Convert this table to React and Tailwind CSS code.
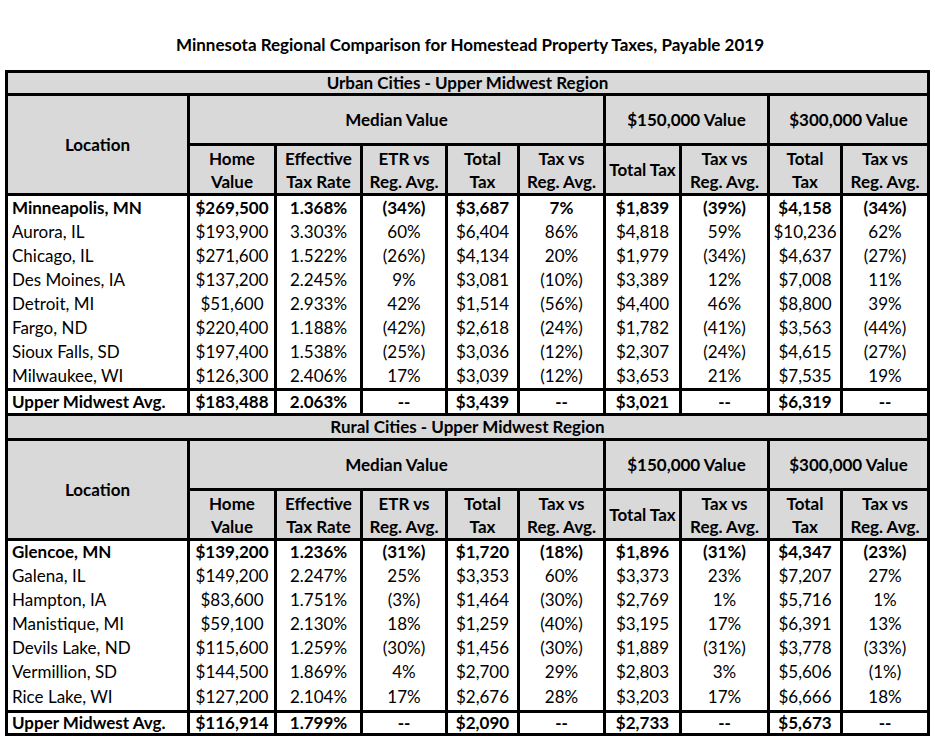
import React from 'react';

const urban = [
  ['Minneapolis, MN', '$269,500', '1.368%', '(34%)', '$3,687', '7%', '$1,839', '(39%)', '$4,158', '(34%)'],
  ['Aurora, IL', '$193,900', '3.303%', '60%', '$6,404', '86%', '$4,818', '59%', '$10,236', '62%'],
  ['Chicago, IL', '$271,600', '1.522%', '(26%)', '$4,134', '20%', '$1,979', '(34%)', '$4,637', '(27%)'],
  ['Des Moines, IA', '$137,200', '2.245%', '9%', '$3,081', '(10%)', '$3,389', '12%', '$7,008', '11%'],
  ['Detroit, MI', '$51,600', '2.933%', '42%', '$1,514', '(56%)', '$4,400', '46%', '$8,800', '39%'],
  ['Fargo, ND', '$220,400', '1.188%', '(42%)', '$2,618', '(24%)', '$1,782', '(41%)', '$3,563', '(44%)'],
  ['Sioux Falls, SD', '$197,400', '1.538%', '(25%)', '$3,036', '(12%)', '$2,307', '(24%)', '$4,615', '(27%)'],
  ['Milwaukee, WI', '$126,300', '2.406%', '17%', '$3,039', '(12%)', '$3,653', '21%', '$7,535', '19%'],
];
const urbanAvg = ['Upper Midwest Avg.', '$183,488', '2.063%', '--', '$3,439', '--', '$3,021', '--', '$6,319', '--'];

const rural = [
  ['Glencoe, MN', '$139,200', '1.236%', '(31%)', '$1,720', '(18%)', '$1,896', '(31%)', '$4,347', '(23%)'],
  ['Galena, IL', '$149,200', '2.247%', '25%', '$3,353', '60%', '$3,373', '23%', '$7,207', '27%'],
  ['Hampton, IA', '$83,600', '1.751%', '(3%)', '$1,464', '(30%)', '$2,769', '1%', '$5,716', '1%'],
  ['Manistique, MI', '$59,100', '2.130%', '18%', '$1,259', '(40%)', '$3,195', '17%', '$6,391', '13%'],
  ['Devils Lake, ND', '$115,600', '1.259%', '(30%)', '$1,456', '(30%)', '$1,889', '(31%)', '$3,778', '(33%)'],
  ['Vermillion, SD', '$144,500', '1.869%', '4%', '$2,700', '29%', '$2,803', '3%', '$5,606', '(1%)'],
  ['Rice Lake, WI', '$127,200', '2.104%', '17%', '$2,676', '28%', '$3,203', '17%', '$6,666', '18%'],
];
const ruralAvg = ['Upper Midwest Avg.', '$116,914', '1.799%', '--', '$2,090', '--', '$2,733', '--', '$5,673', '--'];

const head = 'border-[3px] border-black bg-[#d9d9d9] font-bold text-center';

// row heights differ a little between the two blocks, like the spreadsheet
const Section = ({ title, rows, avg, titleH, medianH, subH, firstH, lastH, avgH }) => (
  <>
    <tr className={titleH}>
      <td colSpan={10} className={head}>{title}</td>
    </tr>
    <tr className={medianH}>
      <td rowSpan={2} className={head}>Location</td>
      <td colSpan={5} className={head}>Median Value</td>
      <td colSpan={2} className={head}>$150,000 Value</td>
      <td colSpan={2} className={head}>$300,000 Value</td>
    </tr>
    <tr className={subH + ' leading-[23px]'}>
      <td className={head}>Home<br />Value</td>
      <td className={head}>Effective<br />Tax Rate</td>
      <td className={head}>ETR vs<br />Reg. Avg.</td>
      <td className={head}>Total<br />Tax</td>
      <td className={head}>Tax vs<br />Reg. Avg.</td>
      <td className={head}>Total Tax</td>
      <td className={head}>Tax vs<br />Reg. Avg.</td>
      <td className={head}>Total<br />Tax</td>
      <td className={head}>Tax vs<br />Reg. Avg.</td>
    </tr>
    {rows.map((r, i) => (
      <tr key={r[0]} className={i === 0 ? firstH : i === rows.length - 1 ? lastH : 'h-[24px]'}>
        {r.map((c, j) => (
          <td
            key={j}
            className={
              'border-x-[3px] border-black ' +
              (j === 0 ? 'text-left pl-[4px] ' : 'text-center ') +
              (i === 0 ? 'font-bold' : '')
            }
          >
            {c}
          </td>
        ))}
      </tr>
    ))}
    <tr className={avgH}>
      {avg.map((c, j) => (
        <td
          key={j}
          className={'border-[3px] border-black font-bold ' + (j === 0 ? 'text-left pl-[4px]' : 'text-center')}
        >
          {c}
        </td>
      ))}
    </tr>
  </>
);

export default function App() {
  return (
    <div className="w-[935px] h-[738px] bg-white text-black font-['Lato',sans-serif] text-[17px] overflow-hidden">
      <div className="pt-[34px] h-[70px] leading-[22px] text-center font-bold pl-[5px]">
        Minnesota Regional Comparison for Homestead Property Taxes, Payable 2019
      </div>
      <table className="ml-[5px] w-[925px] table-fixed border-collapse leading-[20px]">
        <colgroup>
          <col className="w-[182px]" />
          <col className="w-[87px]" />
          <col className="w-[86px]" />
          <col className="w-[85px]" />
          <col className="w-[72px]" />
          <col className="w-[86px]" />
          <col className="w-[76px]" />
          <col className="w-[88px]" />
          <col className="w-[73px]" />
          <col className="w-[87px]" />
        </colgroup>
        <tbody>
          <Section
            title="Urban Cities - Upper Midwest Region"
            rows={urban}
            avg={urbanAvg}
            titleH="h-[23px]"
            medianH="h-[50px]"
            subH="h-[50px]"
            firstH="h-[25px]"
            lastH="h-[26px]"
            avgH="h-[25px]"
          />
          <Section
            title="Rural Cities - Upper Midwest Region"
            rows={rural}
            avg={ruralAvg}
            titleH="h-[25px]"
            medianH="h-[50px]"
            subH="h-[50px]"
            firstH="h-[24px]"
            lastH="h-[28px]"
            avgH="h-[23px]"
          />
        </tbody>
      </table>
    </div>
  );
}
